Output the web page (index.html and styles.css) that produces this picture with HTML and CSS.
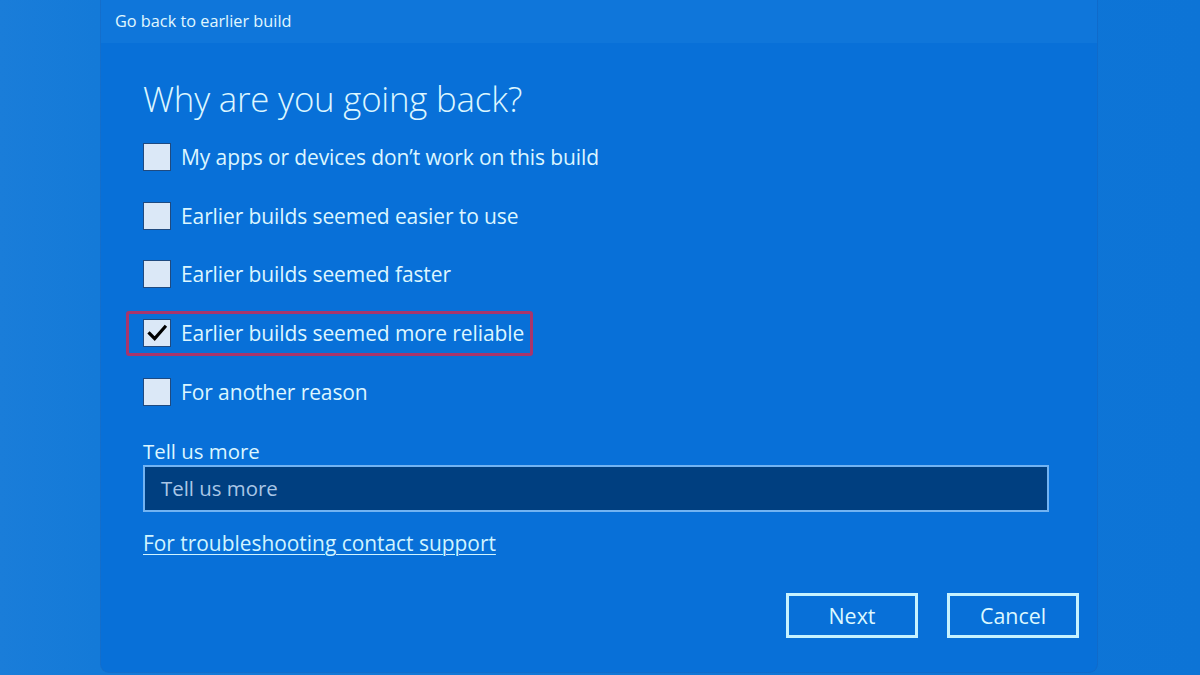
FILE: index.html
```html
<!DOCTYPE html>
<html lang="en">
<head>
<meta charset="utf-8">
<title>Go back to earlier build</title>
<link rel="stylesheet" href="styles.css">
</head>
<body>
<div class="screen">
  <div class="dialog">
    <div class="titlebar">Go back to earlier build</div>
    <div class="content">
      <h1 class="heading">Why are you going back?</h1>
      <ul class="options">
        <li class="option"><span class="box"></span><span class="label">My apps or devices don’t work on this build</span></li>
        <li class="option"><span class="box"></span><span class="label">Earlier builds seemed easier to use</span></li>
        <li class="option"><span class="box"></span><span class="label">Earlier builds seemed faster</span></li>
        <li class="option highlighted"><span class="box checked"><svg viewBox="0 0 28 28" width="28" height="28"><path d="M6 14.5 L11.5 20 L22.5 7.5" fill="none" stroke="#000" stroke-width="3.4" stroke-linecap="square" stroke-linejoin="miter"/></svg></span><span class="label">Earlier builds seemed more reliable</span><span class="mark"></span></li>
        <li class="option"><span class="box"></span><span class="label">For another reason</span></li>
      </ul>
      <div class="field-label">Tell us more</div>
      <div class="input"><span class="placeholder">Tell us more</span></div>
      <a class="link" href="#">For troubleshooting contact support</a>
    </div>
    <div class="actions">
      <button class="btn">Next</button>
      <button class="btn">Cancel</button>
    </div>
  </div>
</div>
</body>
</html>
```

FILE: styles.css
```css
* { box-sizing: border-box; }
html, body { margin: 0; padding: 0; }
body {
  width: 1200px;
  height: 675px;
  overflow: hidden;
  font-family: "Open Sans", "Noto Sans", sans-serif;
  background: linear-gradient(90deg, #1a7dd9 0%, #147ad8 8%, #0d74d6 100%);
}
.screen {
  display: flex;
  padding-left: 101px;
  height: 675px;
}
.dialog {
  width: 996px;
  height: 672px;
  background: #0870d8;
  border-radius: 0 0 8px 8px;
  display: flex;
  flex-direction: column;
  color: #dcf6ff;
  box-shadow: 0 0 0 1px rgba(20, 90, 180, 0.35);
}
.titlebar {
  height: 43px;
  background: #0f76da;
  font-size: 16.3px;
  padding: 10px 0 0 14px;
  color: #e0f8ff;
}
.content {
  padding-left: 42px;
  flex: 1;
  display: flex;
  flex-direction: column;
}
.heading {
  margin: 35px 0 0 0;
  font-size: 34.8px;
  font-weight: 300;
  line-height: 42px;
  height: 42px;
  letter-spacing: -0.2px;
}
.options {
  list-style: none;
  margin: 8px 0 0 0;
  padding: 0;
}
.option {
  position: relative;
  height: 58.6px;
  display: flex;
  align-items: center;
  gap: 10px;
}
.box {
  width: 28px;
  height: 28px;
  background: #dbe8f7;
  border: 1px solid #1f4a80;
  display: flex;
  align-items: center;
  justify-content: center;
}
.box svg { display: block; }
.label {
  font-size: 21px;
  line-height: 28px;
  letter-spacing: -0.1px;
}
.mark {
  position: absolute;
  left: -17px;
  top: 7px;
  width: 407px;
  height: 45px;
  border: 3px solid #a8356c;
  border-radius: 3px;
}
.field-label {
  margin-top: 17px;
  font-size: 20.4px;
  line-height: 26px;
  height: 26px;
}
.input {
  margin-top: 1px;
  width: 906px;
  height: 47px;
  background: #003f80;
  border: 2px solid #72b3f2;
  display: flex;
  align-items: center;
  padding-left: 16px;
}
.placeholder {
  font-size: 20.4px;
  color: #a9c6e6;
}
.link {
  margin-top: 18px;
  font-size: 20.9px;
  line-height: 26px;
  color: #d0f4ff;
  text-decoration: underline;
  text-underline-offset: 3px;
  text-decoration-thickness: 1px;
  align-self: flex-start;
}
.actions {
  display: flex;
  justify-content: flex-end;
  gap: 29px;
  padding: 0 18px 34px 0;
}
.btn {
  width: 132px;
  height: 45px;
  background: transparent;
  border: 3px solid #c6f2ff;
  color: #dcf8ff;
  font-family: "Open Sans", "Noto Sans", sans-serif;
  font-size: 21.4px;
  padding: 0;
}
```
